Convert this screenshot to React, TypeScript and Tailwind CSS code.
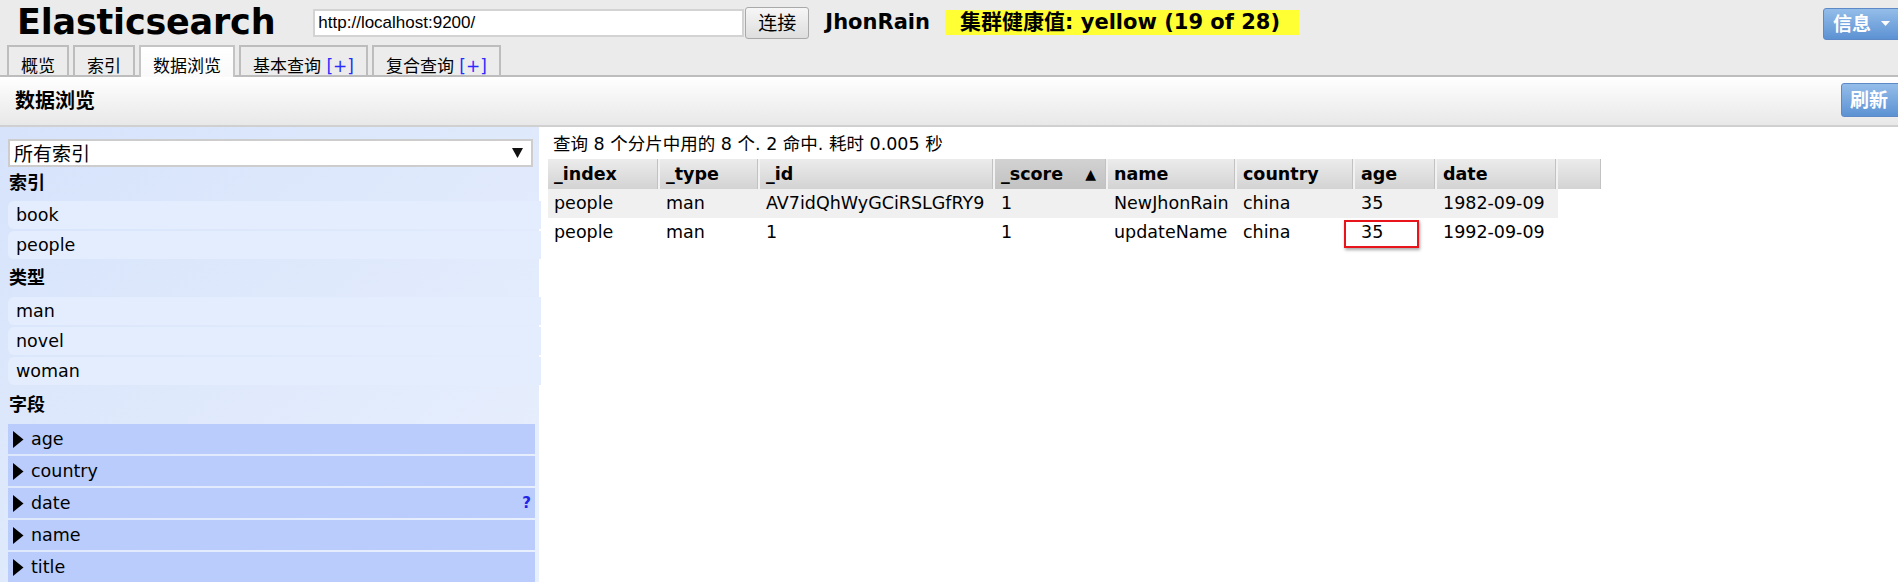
import { ReactNode } from 'react';

const cols = [
  { key: '_index', w: 'w-[112px]' },
  { key: '_type', w: 'w-[100px]' },
  { key: '_id', w: 'w-[235px]' },
  { key: '_score', w: 'w-[113px]', sorted: true },
  { key: 'name', w: 'w-[129px]' },
  { key: 'country', w: 'w-[118px]' },
  { key: 'age', w: 'w-[82px]' },
  { key: 'date', w: 'w-[121px]' },
];

const rows = [
  ['people', 'man', 'AV7idQhWyGCiRSLGfRY9', '1', 'NewJhonRain', 'china', '35', '1982-09-09'],
  ['people', 'man', '1', '1', 'updateName', 'china', '35', '1992-09-09'],
];

const Tab = ({ children, active }: { children: ReactNode; active?: boolean }) => (
  <div
    className={
      active
        ? 'h-[32px] -mb-[2px] px-[12px] pt-[9px] border-2 border-b-0 border-[#c4c4c4] bg-gradient-to-b from-[#ffffff] to-[#fafafa] text-[17px] leading-[20px] overflow-hidden'
        : 'h-[30px] px-[12px] pt-[9px] border-2 border-b-0 border-[#bdbdbd] bg-[#ececec] text-[17px] leading-[20px] overflow-hidden'
    }
  >
    {children}
  </div>
);

const Plus = () => <span className="text-[#2b2bff] font-['DejaVu_Sans',sans-serif]"> [+]</span>;

const Heading = ({ children, mt }: { children: ReactNode; mt: string }) => (
  <div className={`${mt} h-[26px] leading-[26px] pl-[1px] text-[18px] font-bold`}>{children}</div>
);

const Filter = ({ children, mt = 'mt-[2px]' }: { children: ReactNode; mt?: string }) => (
  <div className={`${mt} h-[28px] leading-[28px] -mr-[8px] pl-[8px] rounded-l-[6px] bg-[#e4edfd]`}>{children}</div>
);

const Field = ({ name, mt = 'mt-[2px]', help }: { name: string; mt?: string; help?: boolean }) => (
  <div className={`${mt} h-[30px] flex items-center pl-[5px] pr-[4px] bg-[#b9ccfb] mr-[-2px]`}>
    <svg width="11" height="17" viewBox="0 0 11 17" className="mr-[7px]">
      <polygon points="0,0 10.5,8.5 0,17" fill="#000" />
    </svg>
    <span className="flex-1">{name}</span>
    {help && <span className="text-[#2323e6] font-bold text-[15px]">?</span>}
  </div>
);

export default function App() {
  return (
    <div className="w-[1898px] h-[582px] overflow-hidden bg-white text-black font-['DejaVu_Sans','Noto_Sans_CJK_SC',sans-serif]">
      {/* top header */}
      <div className="h-[77px] bg-[#ebebeb] border-b-2 border-[#bdbdbd]">
        <div className="h-[45px] flex items-center pl-[17px]">
          <div className="text-[35px] font-bold leading-none tracking-[-0.2px]">Elasticsearch</div>
          <div className="ml-[38px] w-[431px] h-[28px] bg-white border-2 border-[#d3d3d3] pl-[3px] flex items-center text-[17px] font-['Liberation_Sans',sans-serif]">
            http://localhost:9200/
          </div>
          <div className="ml-[1px] w-[64px] h-[32px] flex items-center justify-center border border-[#a9a9a9] rounded-[3px] bg-gradient-to-b from-[#f6f6f6] to-[#dedede] text-[19px] font-['Noto_Sans_CJK_SC',sans-serif]">
            连接
          </div>
          <div className="ml-[16px] text-[21px] font-bold">JhonRain</div>
          <div className="ml-[15px] h-[25px] w-[354px] pl-[15px] bg-[#ffff33] flex items-center text-[21px] font-bold leading-none">
            集群健康值: yellow (19 of 28)
          </div>
          <div className="ml-auto self-start mt-[8px] w-[82px] -mr-[7px] h-[32px] flex items-center pl-[9px] rounded-[3px] border border-[#5d89c7] bg-gradient-to-b from-[#94bde9] to-[#5c92d3] text-white font-bold text-[19px]">
            信息
            <svg width="9" height="6" viewBox="0 0 9 6" className="ml-[10px]">
              <polygon points="0,0 9,0 4.5,5" fill="#fff" />
            </svg>
          </div>
        </div>
        <div className="h-[30px] flex items-end gap-[4px] pl-[7px]">
          <Tab>概览</Tab>
          <Tab>索引</Tab>
          <Tab active>数据浏览</Tab>
          <Tab>
            基本查询<Plus />
          </Tab>
          <Tab>
            复合查询<Plus />
          </Tab>
        </div>
      </div>

      {/* section bar */}
      <div className="h-[50px] flex items-start bg-gradient-to-b from-[#ffffff] to-[#e8e8e8] border-b-2 border-[#d0d0d0]">
        <div className="ml-[15px] mt-[11px] text-[20px] font-bold leading-[26px]">数据浏览</div>
        <div className="ml-auto mt-[6px] -mr-[6px] w-[63px] h-[34px] flex items-center pl-[8px] rounded-[3px] border border-[#5d89c7] bg-gradient-to-b from-[#94bde9] to-[#5c92d3] text-white font-bold text-[19px]">
          刷新
        </div>
      </div>

      {/* content */}
      <div className="flex h-[455px]">
        <div className="w-[539px] shrink-0 pt-[12px] pl-[8px] pr-[6px] bg-gradient-to-br from-[#d6e3fb] to-[#e9f0fd] text-[17.5px]">
          <div className="h-[28px] flex items-center justify-between border-2 border-[#cdcdcd] bg-white pl-[4px] pr-[8px] text-[19px] font-['Noto_Sans_CJK_SC',sans-serif]">
            <span>所有索引</span>
            <svg width="11" height="10" viewBox="0 0 11 10">
              <polygon points="0,0 11,0 5.5,10" fill="#111" />
            </svg>
          </div>
          <Heading mt="mt-[3px]">索引</Heading>
          <Filter mt="mt-[5px]">book</Filter>
          <Filter>people</Filter>
          <Heading mt="mt-[6px]">类型</Heading>
          <Filter mt="mt-[6px]">man</Filter>
          <Filter>novel</Filter>
          <Filter>woman</Filter>
          <Heading mt="mt-[7px]">字段</Heading>
          <Field name="age" mt="mt-[6px]" />
          <Field name="country" />
          <Field name="date" help />
          <Field name="name" />
          <Field name="title" />
        </div>

        <div className="flex-1 pl-[9px] pt-[7px] text-[17.5px]">
          <div className="h-[20px] leading-[20px] pl-[5px]">查询 8 个分片中用的 8 个. 2 命中. 耗时 0.005 秒</div>
          <div className="mt-[5px]">
            <div className="flex h-[30px]">
              {cols.map((c) => (
                <div
                  key={c.key}
                  className={`${c.w} flex items-center pl-[6px] font-bold border-r-2 border-[#f2f2f2] shadow-[inset_-1px_0_0_#c2c2c2] ${
                    c.sorted ? 'bg-gradient-to-b from-[#d2d2d2] to-[#c2c2c2]' : 'bg-gradient-to-b from-[#ececec] to-[#d3d3d3]'
                  }`}
                >
                  {c.key}
                  {c.sorted && <span className="ml-auto mr-[10px] text-[14px]">▲</span>}
                </div>
              ))}
              <div className="w-[43px] border-r border-[#c2c2c2] bg-gradient-to-b from-[#ececec] to-[#d3d3d3]" />
            </div>
            {rows.map((r, i) => (
              <div key={i} className={`flex h-[29px] w-max ${i === 0 ? 'bg-[#f0f0f0]' : ''}`}>
                {r.map((v, j) => (
                  <div key={j} className={`${cols[j].w} relative flex items-center pl-[6px]`}>
                    {v}
                    {i === 1 && j === 6 && (
                      <div className="absolute left-[-11px] top-[2px] w-[75px] h-[28px] border-2 border-[#e8141b] shadow-[1px_2px_3px_rgba(0,0,0,0.35)]" />
                    )}
                  </div>
                ))}
              </div>
            ))}
          </div>
        </div>
      </div>
    </div>
  );
}
